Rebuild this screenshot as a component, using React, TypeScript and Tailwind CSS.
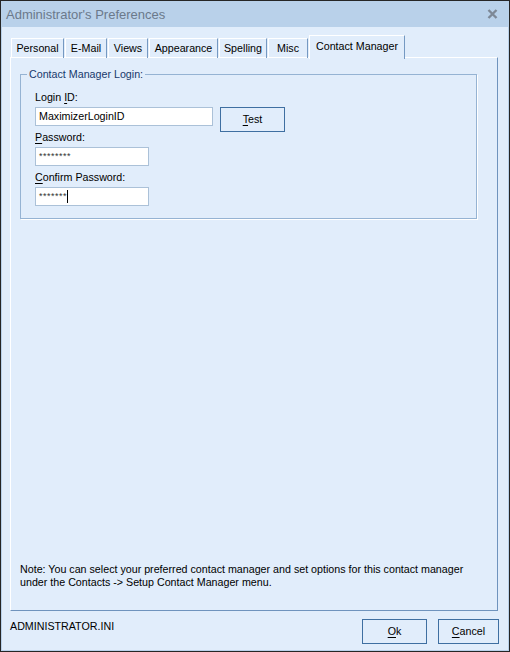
import React from "react";

const tabs = [
  { label: "Personal", w: "w-[53px]" },
  { label: "E-Mail", w: "w-[42px]" },
  { label: "Views", w: "w-[40px]" },
  { label: "Appearance", w: "w-[69px]" },
  { label: "Spelling", w: "w-[48px]" },
  { label: "Misc", w: "w-[40px]" },
];

function Field({
  label,
  ul,
  rest,
  value,
  width,
  caret,
}: {
  label?: string;
  ul: string;
  rest: string;
  value: string;
  width: string;
  caret?: boolean;
}) {
  return (
    <>
      <div className="h-[13px] leading-[13px]">
        {label}
        <span className="underline underline-offset-[2px]">{ul}</span>
        {rest}
      </div>
      <div
        className={`mt-[3px] h-[19px] ${width} bg-white border border-[#abc1d8] pl-[3px] flex items-center leading-none`}
      >
        <span className={caret !== undefined ? "text-[9px] text-[#333] tracking-[0.5px]" : ""}>{value}</span>
        {caret && <span className="w-px h-[13px] bg-black" />}
      </div>
    </>
  );
}

export default function App() {
  return (
    <div className="w-[510px] h-[652px] border border-[#262626] flex flex-col bg-[#e1edfb] text-[10.7px] text-black font-['Liberation_Sans',Arial,sans-serif]">
      {/* title bar */}
      <div className="h-[26px] shrink-0 bg-[#b9d1ea] flex items-center justify-between pl-[5px] pr-[11px]">
        <span className="text-[13px] text-[#6b798b] leading-none">Administrator's Preferences</span>
        <svg width="11" height="10" viewBox="0 0 11 10">
          <path d="M1.5 1 L9.5 9 M9.5 1 L1.5 9" stroke="#7d8896" strokeWidth="2.4" />
        </svg>
      </div>

      <div className="flex-1 flex flex-col border-x border-b border-[#b9d1ea] pt-[8px] pb-[6px]">
        {/* tabs */}
        <div className="h-[23px] flex items-end gap-px pl-[9px] relative z-10">
          {tabs.map((t) => (
            <div
              key={t.label}
              className={`${t.w} h-[20px] border-l border-t border-white border-r border-r-[#7599c2] flex items-center justify-center`}
            >
              {t.label}
            </div>
          ))}
          <div className="w-[96px] h-[24px] -mb-px pb-[2px] bg-[#e1edfb] border-l border-t border-white border-r border-r-[#7599c2] flex items-center justify-center">
            Contact Manager
          </div>
        </div>

        {/* panel */}
        <div className="ml-[8px] mr-[10px] -mt-px flex-1 flex flex-col border-l border-t border-white border-r border-b border-r-[#6f93bd] border-b-[#6f93bd] pl-[9px] pr-[19px] pt-[10px] pb-[21px]">
          <fieldset className="w-[457px] border border-[#95b3d3] shadow-[1px_1px_0_#ffffff] px-[6px] pb-[12px]">
            <legend className="px-[2px] h-[13px] leading-[13px] text-[#17396b]">Contact Manager Login:</legend>
            <div className="pl-[8px] mt-[10px]">
              <Field label="Login " ul="I" rest="D:" value="MaximizerLoginID" width="w-[178px]" />
              <div className="-mt-[19px] ml-[185px] h-[19px] flex items-start">
                <button className="w-[65px] h-[25px] shrink-0 border border-[#3f6fa1] bg-[#e1edfb] leading-none">
                  <span className="underline underline-offset-[2px]">T</span>est
                </button>
              </div>
              <div className="mt-[5px]">
                <Field ul="P" rest="assword:" value="********" width="w-[114px]" caret={false} />
              </div>
              <div className="mt-[5px]">
                <Field ul="C" rest="onfirm Password:" value="*******" width="w-[114px]" caret />
              </div>
            </div>
          </fieldset>

          <div className="flex-1" />

          <p className="leading-[13px]">
            Note: You can select your preferred contact manager and set options for this contact manager
            <br />
            under the Contacts -&gt; Setup Contact Manager menu.
          </p>
        </div>

        {/* footer */}
        <div className="mt-[8px] h-[25px] flex items-start pl-[8px] pr-[9px]">
          <span className="flex-1 leading-[13px] mt-px">ADMINISTRATOR.INI</span>
          <button className="w-[65px] h-[25px] border border-[#3f6fa1] bg-[#e1edfb] leading-none">
            <span className="underline underline-offset-[2px]">O</span>k
          </button>
          <button className="ml-[11px] w-[61px] h-[25px] border border-[#3f6fa1] bg-[#e1edfb] leading-none">
            <span className="underline underline-offset-[2px]">C</span>ancel
          </button>
        </div>
      </div>
    </div>
  );
}
